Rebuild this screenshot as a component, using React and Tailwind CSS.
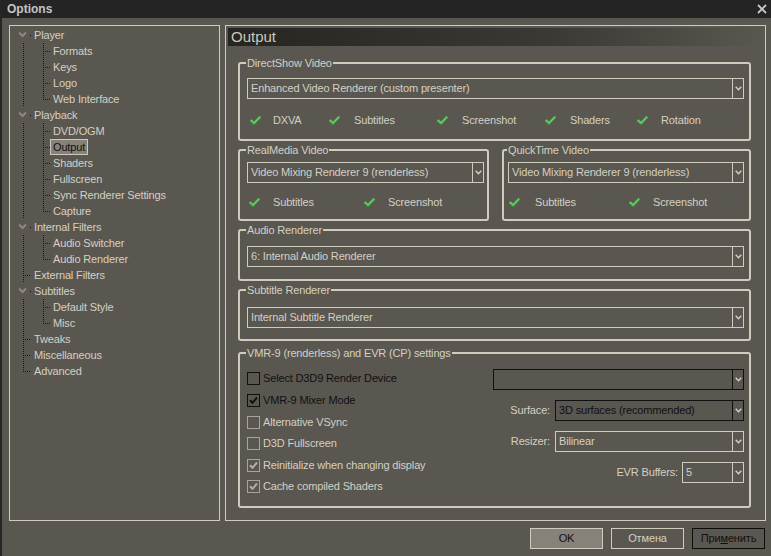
import React from "react";

const tree = [
  { t: "Player", c: ["Formats", "Keys", "Logo", "Web Interface"] },
  { t: "Playback", c: ["DVD/OGM", "Output", "Shaders", "Fullscreen", "Sync Renderer Settings", "Capture"] },
  { t: "Internal Filters", c: ["Audio Switcher", "Audio Renderer"] },
  { t: "External Filters" },
  { t: "Subtitles", c: ["Default Style", "Misc"] },
  { t: "Tweaks" },
  { t: "Miscellaneous" },
  { t: "Advanced" },
];

const DOT = "#161616";

function RootCell({ kind }) {
  return (
    <svg width="14" height="16" className="shrink-0">
      {kind === "chev" && (
        <>
          <path d="M2 5.5 L5.5 9 L9 5.5" fill="none" stroke="#8d897e" strokeWidth="2" />
          <rect x="13" y="8" width="1" height="1" fill={DOT} />
        </>
      )}
      {(kind === "full" || kind === "pass") && (
        <line x1="6.5" y1="0" x2="6.5" y2="16" stroke={DOT} strokeDasharray="1 1" shapeRendering="crispEdges" />
      )}
      {kind === "last" && (
        <line x1="6.5" y1="0" x2="6.5" y2="9" stroke={DOT} strokeDasharray="1 1" shapeRendering="crispEdges" />
      )}
      {(kind === "full" || kind === "last") && (
        <line x1="8" y1="8.5" x2="14" y2="8.5" stroke={DOT} strokeDasharray="1 1" shapeRendering="crispEdges" />
      )}
    </svg>
  );
}

function ChildCell({ last }) {
  return (
    <svg width="19" height="16" className="shrink-0">
      <line x1="12.5" y1="0" x2="12.5" y2={last ? 9 : 16} stroke={DOT} strokeDasharray="1 1" shapeRendering="crispEdges" />
      <line x1="14" y1="8.5" x2="19" y2="8.5" stroke={DOT} strokeDasharray="1 1" shapeRendering="crispEdges" />
    </svg>
  );
}

function Label({ text, sel }) {
  return (
    <span
      className={
        sel
          ? "flex h-[16px] items-center border border-[#cbc7b9] bg-[#86827a] px-[2px] text-[#101010] whitespace-nowrap"
          : "flex h-[16px] items-center border border-transparent px-[2px] whitespace-nowrap"
      }
    >
      {text}
    </span>
  );
}

function Tree() {
  const rows = [];
  tree.forEach((n, i) => {
    const isLast = i === tree.length - 1;
    rows.push(
      <div key={n.t} className="flex h-[16px] items-center">
        <RootCell kind={n.c ? "chev" : isLast ? "last" : "full"} />
        <Label text={n.t} />
      </div>
    );
    (n.c || []).forEach((c, j) => {
      rows.push(
        <div key={c} className="flex h-[16px] items-center">
          <RootCell kind="pass" />
          <ChildCell last={j === n.c.length - 1} />
          <Label text={c} sel={c === "Output"} />
        </div>
      );
    });
  });
  return <div className="flex flex-col">{rows}</div>;
}

function Arrow() {
  return (
    <svg width="7" height="5" viewBox="0 0 7 5">
      <path d="M0.7 0.8 L3.5 3.8 L6.3 0.8" fill="none" stroke="#d4d0c4" strokeWidth="1.4" />
    </svg>
  );
}

function Select({ text, dark, className }) {
  return (
    <div
      className={`flex h-[21px] shrink-0 border ${
        dark ? "border-[#101010] text-[#101010]" : "border-[#cfcbbd] text-[#d4d0c4]"
      } ${className}`}
    >
      <div className="flex-1 overflow-hidden whitespace-nowrap pl-[3px] leading-[19px]">{text}</div>
      <div
        className={`flex w-[11px] items-center justify-center border-l ${
          dark ? "border-[#101010]" : "border-[#cfcbbd]"
        }`}
      >
        <Arrow />
      </div>
    </div>
  );
}

function GreenCheck() {
  return (
    <svg width="13" height="10" viewBox="0 0 13 10" className="shrink-0">
      <path d="M1.5 5 L5 8.3 L11.5 1.5" fill="none" stroke="#3c8f40" strokeWidth="3.2" strokeLinejoin="round" />
      <path d="M1.8 5 L5 8 L11.2 1.7" fill="none" stroke="#72cf70" strokeWidth="1.5" />
    </svg>
  );
}

function Feature({ label, className, textClass }) {
  return (
    <div className={`flex h-[14px] items-center ${className}`}>
      <GreenCheck />
      <span className={textClass}>{label}</span>
    </div>
  );
}

function Group({ title, className, children }) {
  return (
    <fieldset className={`rounded-[3px] border-2 border-[#cfcbbd] ${className}`}>
      <legend className="-ml-[1px] px-[1px] leading-[12px] text-[#d4d0c4]">{title}</legend>
      {children}
    </fieldset>
  );
}

function Box({ checked, dark }) {
  const stroke = dark ? "#101010" : "#b3afa4";
  return (
    <div
      className={`flex h-[13px] w-[13px] shrink-0 items-center justify-center border ${
        dark ? "border-[#101010]" : "border-[#a8a499]"
      }`}
    >
      {checked && (
        <svg width="9" height="9" viewBox="0 0 9 9">
          <path d="M1 4.2 L3.5 6.8 L8 1.5" fill="none" stroke={stroke} strokeWidth="2" />
        </svg>
      )}
    </div>
  );
}

const vmrRows = [
  { t: "Select D3D9 Render Device", checked: false, dark: true, m: "mt-[13px]" },
  { t: "VMR-9 Mixer Mode", checked: true, dark: true, m: "mt-[9px]" },
  { t: "Alternative VSync", checked: false, dark: false, m: "mt-[9px]" },
  { t: "D3D Fullscreen", checked: false, dark: false, m: "mt-[8px]" },
  { t: "Reinitialize when changing display", checked: true, dark: false, m: "mt-[9px]" },
  { t: "Cache compiled Shaders", checked: true, dark: false, m: "mt-[8px]" },
];

export default function App() {
  return (
    <div className="flex h-[556px] w-[771px] flex-col overflow-hidden border-l-2 border-[#262626] bg-[#5a5750] font-['Liberation_Sans',Arial,sans-serif] text-[11px] tracking-[-0.15px] text-[#d4d0c4]">
      {/* title bar */}
      <div className="flex h-[18px] shrink-0 items-center justify-between bg-[#242424] pl-[5px] pr-[4px]">
        <span className="text-[12px] font-bold tracking-normal text-[#c4c4c4]">Options</span>
        <svg width="10" height="10" viewBox="0 0 10 10">
          <path d="M1 1 L9 9 M9 1 L1 9" stroke="#c8c8c8" strokeWidth="1.8" />
        </svg>
      </div>

      <div className="flex gap-[5px] pl-[7px] pt-[7px]">
        {/* tree */}
        <div className="h-[496px] w-[211px] shrink-0 border border-[#cfcbbd] pl-[7px] pt-[1px]">
          <Tree />
        </div>

        {/* page */}
        <div className="flex h-[496px] w-[541px] shrink-0 flex-col border border-[#cfcbbd]">
          <div className="mx-[2px] mt-[2px] h-[18px] bg-linear-to-r from-[#262522] via-[#3b3934] via-60% to-[#5a5750] pl-[3px] text-[15px] leading-[18px] tracking-normal text-[#cbc7bc]">
            Output
          </div>

          <Group title="DirectShow Video" className="ml-[12px] mt-[11px] h-[84px] w-[513px] pl-[7px] pr-[5px] pt-[9px]">
            <Select text="Enhanced Video Renderer (custom presenter)" className="w-[497px]" />
            <div className="ml-[2px] mt-[14px] flex">
              <Feature label="DXVA" className="w-[79px]" textClass="ml-[11px]" />
              <Feature label="Subtitles" className="w-[108px]" textClass="ml-[13px]" />
              <Feature label="Screenshot" className="w-[108px]" textClass="ml-[13px]" />
              <Feature label="Shaders" className="w-[92px]" textClass="ml-[13px]" />
              <Feature label="Rotation" className="" textClass="ml-[12px]" />
            </div>
          </Group>

          <div className="ml-[12px] mt-[3px] flex gap-[13px]">
            <Group title="RealMedia Video" className="h-[77px] w-[251px] pl-[7px] pt-[6px]">
              <Select text="Video Mixing Renderer 9 (renderless)" className="w-[237px]" />
              <div className="ml-[1px] mt-[12px] flex">
                <Feature label="Subtitles" className="w-[115px]" textClass="ml-[12px]" />
                <Feature label="Screenshot" className="" textClass="ml-[12px]" />
              </div>
            </Group>
            <Group title="QuickTime Video" className="h-[77px] w-[249px] pl-[4px] pt-[6px]">
              <Select text="Video Mixing Renderer 9 (renderless)" className="w-[236px]" />
              <div className="mt-[12px] flex">
                <Feature label="Subtitles" className="w-[120px]" textClass="ml-[14px]" />
                <Feature label="Screenshot" className="" textClass="ml-[12px]" />
              </div>
            </Group>
          </div>

          <Group title="Audio Renderer" className="ml-[12px] mt-[3px] h-[57px] w-[513px] pl-[7px] pt-[10px]">
            <Select text="6: Internal Audio Renderer" className="w-[497px]" />
          </Group>

          <Group title="Subtitle Renderer" className="ml-[12px] mt-[3px] h-[57px] w-[513px] pl-[7px] pt-[11px]">
            <Select text="Internal Subtitle Renderer" className="w-[497px]" />
          </Group>

          <Group title="VMR-9 (renderless) and EVR (CP) settings" className="ml-[12px] mt-[6px] h-[161px] w-[513px] pl-[7px] pr-[5px]">
            <div className="flex">
              <div className="flex flex-1 flex-col">
                {vmrRows.map((r) => (
                  <div key={r.t} className={`flex h-[13px] items-center ${r.m}`}>
                    <Box checked={r.checked} dark={r.dark} />
                    <span className={`ml-[3px] whitespace-nowrap ${r.dark ? "text-[#101010]" : "text-[#d4d0c4]"}`}>
                      {r.t}
                    </span>
                  </div>
                ))}
              </div>
              <div className="flex w-[251px] flex-col gap-[10px] pt-[10px]">
                <Select text="" dark className="w-[251px]" />
                <div className="flex items-center justify-end gap-[5px]">
                  <span>Surface:</span>
                  <Select text="3D surfaces (recommended)" dark className="w-[189px]" />
                </div>
                <div className="flex items-center justify-end gap-[5px]">
                  <span>Resizer:</span>
                  <Select text="Bilinear" className="w-[189px]" />
                </div>
                <div className="flex items-center justify-end gap-[4px]">
                  <span>EVR Buffers:</span>
                  <Select text="5" className="w-[62px]" />
                </div>
              </div>
            </div>
          </Group>
        </div>
      </div>

      {/* buttons */}
      <div className="mt-[7px] flex justify-end gap-[8px] pr-[6px]">
        <button className="h-[21px] w-[73px] border border-[#d0ccbe] bg-[#86827a] text-[#101010]">OK</button>
        <button className="h-[21px] w-[73px] border border-[#d0ccbe] text-[#d4d0c4]">Отмена</button>
        <button className="h-[21px] w-[73px] border border-[#0c0c0c] text-[#101010]">
          При<span className="underline">м</span>енить
        </button>
      </div>
    </div>
  );
}
